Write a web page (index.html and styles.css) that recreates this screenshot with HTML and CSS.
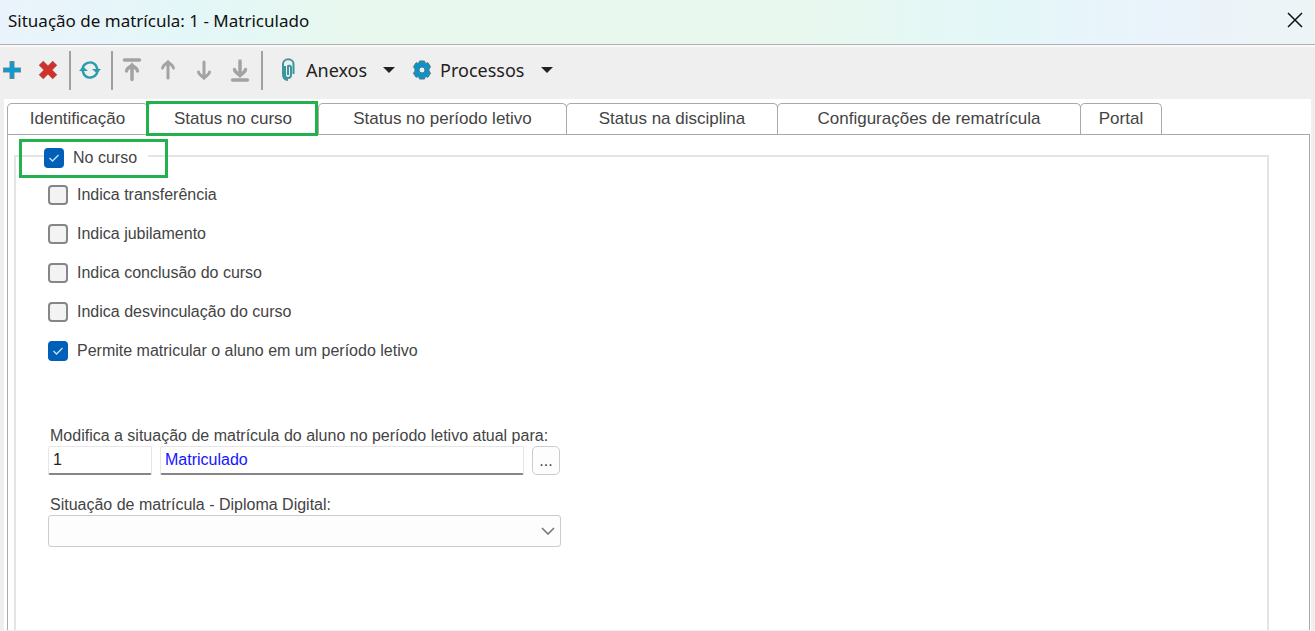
FILE: index.html
```
<!DOCTYPE html>
<html lang="pt-BR">
<head>
  <meta charset="UTF-8" />
  <meta name="viewport" content="width=device-width, initial-scale=1" />
  <title>Situação de matrícula</title>
  <link rel="stylesheet" href="styles.css">
</head>
<body>
<header class="titlebar">
  <h1>Situação de matrícula: 1 - Matriculado</h1>
  <button class="close" aria-label="Fechar">
    <svg width="16" height="16" viewBox="0 0 16 16"><path d="M1 1l14 14M15 1L1 15" fill="none" stroke="#111" stroke-width="1.5"/></svg>
  </button>
</header>

<div class="toolbar">
  <button class="tool" aria-label="Novo">
    <svg width="24" height="24" viewBox="0 0 24 24"><path d="M12 3v18M3 12h18" fill="none" stroke="#6f8790" stroke-width="5"/><path d="M12 4v16M4 12h16" fill="none" stroke="#0a9bd0" stroke-width="3.4"/></svg>
  </button>
  <button class="tool" aria-label="Excluir">
    <svg width="24" height="24" viewBox="0 0 24 24"><path d="M5 5l14 14M19 5L5 19" fill="none" stroke="#a65a50" stroke-width="6.4"/><path d="M5.5 5.5l13 13M18.5 5.5l-13 13" fill="none" stroke="#d3302b" stroke-width="5"/></svg>
  </button>
  <span class="divider"></span>
  <button class="tool" aria-label="Atualizar">
    <svg width="24" height="24" viewBox="0 0 24 24"><path d="M4.5 12A7.5 7.5 0 0 1 18 7.500l1.500 4M19.500 12A7.500 7.500 0 0 1 6 16.500l-1.500-4" fill="none" stroke="#2a9dad" stroke-width="2.400"/><path d="M14 11h9l-4 4.500zM10 13H1l4-4.500z" fill="#2a9dad"/></svg>
  </button>
  <span class="divider"></span>
  <button class="tool" aria-label="Primeiro">
    <svg width="24" height="24" viewBox="0 0 24 24"><path d="M4.500 2h15M12 21.500V8M6.500 13c0-3 3-3 5.500-6 2.500 3 5.500 3 5.500 6" fill="none" stroke="#a3a3a3" stroke-width="3.500" stroke-linecap="round"/></svg>
  </button>
  <button class="tool" aria-label="Anterior">
    <svg width="24" height="24" viewBox="0 0 24 24"><path d="M12 20V5M6.500 10c0-3 3-3 5.500-6 2.500 3 5.500 3 5.500 6" fill="none" stroke="#a3a3a3" stroke-width="3" stroke-linecap="round"/></svg>
  </button>
  <button class="tool" aria-label="Próximo">
    <svg width="24" height="24" viewBox="0 0 24 24"><path d="M12 4v15M6.500 14c0 3 3 3 5.500 6 2.500-3 5.500-3 5.500-6" fill="none" stroke="#a3a3a3" stroke-width="3" stroke-linecap="round"/></svg>
  </button>
  <button class="tool" aria-label="Último">
    <svg width="24" height="24" viewBox="0 0 24 24"><path d="M4.500 22h15M12 3v13M6.500 11.500c0 3 3 3 5.500 6 2.500-3 5.500-3 5.500-6" fill="none" stroke="#a3a3a3" stroke-width="3.500" stroke-linecap="round"/></svg>
  </button>
  <span class="divider"></span>
  <button class="menu">
    <svg width="24" height="24" viewBox="0 0 24 24"><path d="M9 8v9a3 3 0 0 0 6 0V9a2 2 0 0 0-3-1v9M7 16V6a5 4.500 0 0 1 10.500 0v10M7 16c0 4 2 6 5 6" fill="none" stroke="#3c969d" stroke-width="2"/></svg>
    <span>Anexos</span>
    <svg class="caret" width="12" height="6" viewBox="0 0 12 6"><path d="M0 0h12L6 6z" fill="#222"/></svg>
  </button>
  <button class="menu">
    <svg width="24" height="24" viewBox="0 0 24 24"><path d="M9.500 3h5l.8 2.500 2.700-.7 2.500 4L19 11v2l1.500 2.200-2.500 4-2.700-.7-.8 2.500h-5l-.8-2.500-2.700.7-2.500-4L5 13v-2L3.500 8.800l2.500-4 2.700.7z" fill="#0c93c8" stroke="#4d7887" stroke-width="1"/><circle cx="12" cy="12" r="3" fill="#efefef" stroke="#4d7887"/></svg>
    <span>Processos</span>
    <svg class="caret" width="12" height="6" viewBox="0 0 12 6"><path d="M0 0h12L6 6z" fill="#222"/></svg>
  </button>
</div>

<main class="content">
  <nav class="tabs" role="tablist">
    <button class="tab" role="tab">Identificação</button>
    <button class="tab active" role="tab" aria-selected="true">Status no curso</button>
    <button class="tab" role="tab">Status no período letivo</button>
    <button class="tab" role="tab">Status na disciplina</button>
    <button class="tab" role="tab">Configurações de rematrícula</button>
    <button class="tab" role="tab">Portal</button>
  </nav>

  <div class="panel">
    <fieldset class="group">
      <legend>
        <label class="check"><input type="checkbox" checked> No curso</label>
      </legend>

      <div class="options">
        <label class="check"><input type="checkbox"> Indica transferência</label>
        <label class="check"><input type="checkbox"> Indica jubilamento</label>
        <label class="check"><input type="checkbox"> Indica conclusão do curso</label>
        <label class="check"><input type="checkbox"> Indica desvinculação do curso</label>
        <label class="check"><input type="checkbox" checked> Permite matricular o aluno em um período letivo</label>
      </div>

      <div class="field">
        <label for="situacao">Modifica a situação de matrícula do aluno no período letivo atual para:</label>
        <div class="lookup">
          <input type="text" class="code" id="situacao" value="1">
          <input type="text" class="name" value="Matriculado" aria-label="Descrição da situação">
          <button class="browse" aria-label="Procurar">...</button>
        </div>
      </div>

      <div class="field">
        <label for="diploma">Situação de matrícula - Diploma Digital:</label>
        <div class="combo">
          <select id="diploma"><option></option></select>
          <svg width="14" height="8" viewBox="0 0 14 8"><path d="M1 1l6 6 6-6" fill="none" stroke="#777" stroke-width="1.600"/></svg>
        </div>
      </div>
    </fieldset>
  </div>
</main>
</body>
</html>
```
FILE: styles.css
```
* {
  box-sizing: border-box;
}
body {
  margin: 0;
  height: 100vh;
  display: flex;
  flex-direction: column;
  overflow: hidden;
  background: #efefef;
  font-family: "Liberation Sans", Arial, sans-serif;
  font-size: 16px;
  color: #444;
}
button {
  padding: 0;
  border: none;
  background: none;
  font: inherit;
  color: inherit;
}
svg {
  display: block;
}

/* barra de título */
.titlebar {
  display: flex;
  align-items: center;
  justify-content: space-between;
  height: 45px;
  padding: 0 12px 4px 8px;
  background: linear-gradient(to right, #eaf3fb, #e4f7f8 14%, #e8f8ee 28%, #e8f8ee 60%, #e4f7f8 76%, #eaf3fb 88%, #edf4f6);
  border-bottom: 1px solid #b0b0b0;
}
.titlebar h1 {
  margin: 0;
  font-family: "Noto Sans", sans-serif;
  font-size: 17px;
  font-weight: normal;
  color: #111;
}

/* barra de ferramentas */
.toolbar {
  display: flex;
  align-items: center;
  height: 54px;
  padding-bottom: 6px;
  border-top: 2px solid #fafafa;
  color: #222;
}
.tool {
  width: 24px;
  margin-right: 12px;
}
.divider {
  width: 2px;
  height: 39px;
  margin-right: 7px;
  margin-left: -3px;
  background: #a0a0a0;
}
.menu {
  display: flex;
  align-items: center;
  gap: 6px;
  margin-left: 6px;
  margin-right: 9px;
  font-family: "Noto Sans", sans-serif;
  font-size: 18px;
}
.caret {
  margin-left: 10px;
}

/* abas */
.content {
  flex: 1;
  display: flex;
  flex-direction: column;
  margin: 0 4px 1px;
  padding: 4px 1px 0 3px;
  background: #fff;
}
.tabs {
  display: grid;
  grid-template-columns: 140px 171px 248px 211px 303px 81px;
  height: 31px;
}
.tab {
  margin-right: -1px;
  border: 1px solid #a9a9a9;
  border-bottom: none;
  border-radius: 5px 5px 0 0;
  font-size: 17px;
}
.tab.active {
  position: relative;
}
.tab.active::after,
.group legend::after {
  content: "";
  position: absolute;
  border: 3px solid #22b14c;
}
.tab.active::after {
  inset: -3px 0 -2px -2px;
}
.panel {
  flex: 1;
  display: flex;
  padding: 9px 40px 0 6px;
  border: 1px solid #a9a9a9;
  border-bottom: none;
}
.group {
  flex: 1;
  min-width: 0;
  margin: 0;
  padding: 0 32px;
  border: 2px solid #e4e4e4;
  border-bottom: none;
}
.group legend {
  position: relative;
  margin-left: -4px;
  padding: 4px 11px 0 0;
}
.group legend::after {
  inset: -5px -20px -10px -25px;
}

/* opções */
.check {
  display: flex;
  align-items: center;
  gap: 9px;
  height: 20px;
}
.check input {
  appearance: none;
  width: 20px;
  height: 20px;
  margin: 0;
  border: 2px solid #868686;
  border-radius: 4px;
  background: #f3f3f3;
}
.check input:checked {
  border-color: #005fb8;
  background: #005fb8 url("data:image/svg+xml,%3Csvg xmlns='http://www.w3.org/2000/svg' viewBox='0 0 16 16'%3E%3Cpath d='M3.500 8l3 3 6-6' fill='none' stroke='%23cfe3f5' stroke-width='1.300'/%3E%3C/svg%3E") center / 16px no-repeat;
}
.options {
  display: grid;
  gap: 19px;
  margin-top: 17px;
  margin-bottom: 65px;
}

/* campos */
.field {
  width: 513px;
  margin-bottom: 20px;
}
.field > label {
  display: block;
  padding-left: 2px;
  line-height: 20px;
}
.lookup {
  display: flex;
  gap: 8px;
  height: 29px;
  padding-right: 1px;
}
.lookup input {
  min-width: 0;
  padding: 0 4px;
  border: 1px solid #e6e6e6;
  border-bottom: 2px solid #868686;
  border-radius: 2px;
  background: #fff;
  font: inherit;
  color: #222;
}
.lookup .code {
  width: 104px;
}
.lookup .name {
  flex: 1;
  color: #1414ff;
}
.browse {
  width: 28px;
  border: 1px solid #ccc;
  border-radius: 5px;
  background: #fdfdfd;
}
.combo {
  position: relative;
}
.combo select {
  appearance: none;
  display: block;
  width: 100%;
  height: 32px;
  border: 1px solid #ccc;
  border-radius: 3px;
  background: #fdfdfd;
  font: inherit;
}
.combo svg {
  position: absolute;
  top: 12px;
  right: 6px;
  pointer-events: none;
}
```
